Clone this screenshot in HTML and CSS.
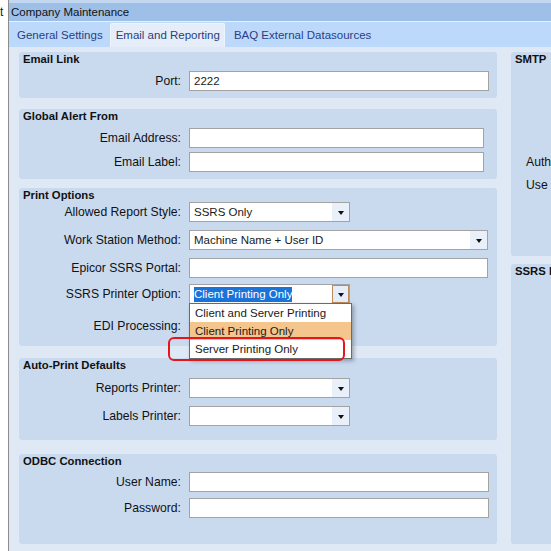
FILE: index.html
```html
<!DOCTYPE html>
<html lang="en">
<head>
    <meta charset="UTF-8">
    <title>Company Maintenance</title>
    <link rel="stylesheet" href="styles.css">
</head>
<body>
    <div id="screen">
        <div id="side"><span>t</span></div>
        <div id="window">
            <div id="topStrip"></div>
            <div id="titleBar">Company Maintenance</div>
            <div id="tabs">
                <div class="tab">General Settings</div>
                <div class="tab active">Email and Reporting</div>
                <div class="tab">BAQ External Datasources</div>
            </div>
            <div id="content">
                <div id="leftCol">
                    <div class="group g-email">
                        <div class="group-title">Email Link</div>
                        <div class="row r5">
                            <label>Port:</label>
                            <div class="input w300">2222</div>
                        </div>
                    </div>

                    <div class="group g-alert">
                        <div class="group-title">Global Alert From</div>
                        <div class="row r5">
                            <label>Email Address:</label>
                            <div class="input w295"></div>
                        </div>
                        <div class="row r4">
                            <label>Email Label:</label>
                            <div class="input w295"></div>
                        </div>
                    </div>

                    <div class="group g-print">
                        <div class="group-title">Print Options</div>
                        <div class="row r0">
                            <label>Allowed Report Style:</label>
                            <div class="select w161">
                                <span class="select-text">SSRS Only</span>
                                <span class="select-btn"><i class="arrow"></i></span>
                            </div>
                        </div>
                        <div class="row r8">
                            <label>Work Station Method:</label>
                            <div class="select w299">
                                <span class="select-text">Machine Name + User ID</span>
                                <span class="select-btn"><i class="arrow"></i></span>
                            </div>
                        </div>
                        <div class="row r8">
                            <label>Epicor SSRS Portal:</label>
                            <div class="input w299"></div>
                        </div>
                        <div class="row r6">
                            <label>SSRS Printer Option:</label>
                            <div class="select w161 open">
                                <span class="select-text"><span class="selected">Client Printing Only</span></span>
                                <span class="select-btn hover"><i class="arrow"></i></span>
                                <div class="dropdown">
                                    <div class="item">Client and Server Printing</div>
                                    <div class="item current">Client Printing Only</div>
                                    <div class="item">Server Printing Only</div>
                                </div>
                                <div class="callout"></div>
                            </div>
                        </div>
                        <div class="row r12">
                            <label>EDI Processing:</label>
                        </div>
                    </div>

                    <div class="group g-auto">
                        <div class="group-title">Auto-Print Defaults</div>
                        <div class="row r6">
                            <label>Reports Printer:</label>
                            <div class="select w161">
                                <span class="select-text"></span>
                                <span class="select-btn"><i class="arrow"></i></span>
                            </div>
                        </div>
                        <div class="row r8">
                            <label>Labels Printer:</label>
                            <div class="select w161">
                                <span class="select-text"></span>
                                <span class="select-btn"><i class="arrow"></i></span>
                            </div>
                        </div>
                    </div>

                    <div class="group g-odbc">
                        <div class="group-title">ODBC Connection</div>
                        <div class="row r4">
                            <label>User Name:</label>
                            <div class="input w300"></div>
                        </div>
                        <div class="row r6">
                            <label>Password:</label>
                            <div class="input w300"></div>
                        </div>
                    </div>
                </div>

                <div id="rightCol">
                    <div class="group g-smtp">
                        <div class="group-title">SMTP</div>
                        <div class="side-label s-auth">Auth</div>
                        <div class="side-label s-use">Use</div>
                    </div>
                    <div class="group g-ssrs">
                        <div class="group-title">SSRS Forms</div>
                    </div>
                </div>
            </div>
        </div>
    </div>
</body>
</html>
```

FILE: styles.css
```css
body {
    margin: 0;
    width: 551px;
    height: 551px;
    overflow: hidden;
    background-color: white;
    font-family: "Liberation Sans", Arial, sans-serif;
    font-size: 11.5px;
    color: #1a1a1a;
}

#screen {
    display: flex;
    height: 551px;
}

#side {
    width: 8px;
    overflow: hidden;
    padding-top: 5px;
    font-size: 12px;
    line-height: 14px;
}

#window {
    flex: 1;
    display: flex;
    flex-direction: column;
    border-left: 1px solid #8c8c8c;
    overflow: hidden;
}

#topStrip {
    height: 3px;
    background-color: #c3d7f0;
}

#titleBar {
    height: 18px;
    line-height: 18px;
    padding-left: 2px;
    background-color: #9dbfe8;
    border-bottom: 1px solid #e9f1fb;
    color: #111;
}

#tabs {
    display: flex;
    height: 25px;
    background-color: #bcd9fb;
}

.tab {
    padding: 7px 7px 0 8px;
    color: #283f82;
    white-space: nowrap;
}

.tab.active {
    margin-top: 1px;
    padding: 5px 4px 0 5px;
    background-color: #e4edf8;
    border: 1px solid #eef4fb;
    border-bottom: none;
    border-radius: 2px 2px 0 0;
}

.tab.active + .tab {
    padding-left: 9px;
}

#content {
    flex: 1;
    display: flex;
    gap: 14px;
    padding: 5px 0 0 10px;
    background-color: #dfe8f5;
}

#leftCol {
    width: 478px;
    flex-shrink: 0;
}

#rightCol {
    width: 100px;
    flex-shrink: 0;
}

.group {
    background-color: #c9daef;
    border-radius: 3px;
    padding-top: 1px;
    box-sizing: border-box;
}

.group-title {
    font-size: 11.3px;
    font-weight: bold;
    line-height: 13px;
    padding-left: 4px;
    color: #111;
    white-space: nowrap;
}

.g-email { height: 46px; margin-bottom: 11px; }
.g-alert { height: 70px; margin-bottom: 9px; }
.g-print { height: 158px; margin-bottom: 12px; }
.g-auto { height: 82px; margin-bottom: 14px; }
.g-odbc { height: 90px; }

.g-smtp { height: 204px; margin-bottom: 8px; }
.g-ssrs { height: 280px; }

.row {
    display: flex;
    align-items: center;
    height: 20px;
}

.r0 { margin-top: 0; }
.r4 { margin-top: 4px; }
.r5 { margin-top: 5px; }
.r6 { margin-top: 6px; }
.r8 { margin-top: 8px; }
.r12 { margin-top: 12px; }

.row label {
    width: 162px;
    padding-right: 8px;
    text-align: right;
    white-space: nowrap;
    font-size: 12.2px;
    color: #111;
}

.input,
.select {
    height: 20px;
    box-sizing: border-box;
    border: 1px solid #a3a3a3;
    background-color: white;
    line-height: 18px;
}

.input {
    padding-left: 4px;
}

.w161 { width: 161px; }
.w295 { width: 295px; }
.w299 { width: 299px; }
.w300 { width: 300px; }

.select {
    display: flex;
    position: relative;
}

.select-text {
    flex: 1;
    padding-left: 4px;
    white-space: nowrap;
    overflow: hidden;
}

.select-btn {
    width: 17px;
    display: flex;
    align-items: center;
    justify-content: center;
    background-color: #e9f0fa;
}

.select-btn.hover {
    box-sizing: border-box;
    border: 1px solid #c08a55;
    background-color: #e4edf9;
}

.arrow {
    width: 0;
    height: 0;
    border-left: 3px solid transparent;
    border-right: 3px solid transparent;
    border-top: 4px solid #111;
    margin-top: 1px;
}

.selected {
    background-color: #1a73d9;
    color: white;
    padding: 1px 0 2px;
}

.dropdown {
    position: absolute;
    top: 18px;
    left: -1px;
    width: 163px;
    box-sizing: border-box;
    border: 1px solid #6b6b6b;
    background-color: white;
    box-shadow: 2px 2px 4px rgba(0, 0, 0, 0.3);
    z-index: 2;
}

.item {
    height: 18px;
    line-height: 18px;
    padding-left: 5px;
    white-space: nowrap;
}

.item.current {
    background-color: #f4c68d;
}

.callout {
    position: absolute;
    top: 52px;
    left: -22px;
    width: 177px;
    height: 24px;
    box-sizing: border-box;
    border: 2px solid #e8141c;
    border-radius: 6px;
    z-index: 3;
}

.side-label {
    padding-left: 15px;
    height: 20px;
    line-height: 20px;
    white-space: nowrap;
    font-size: 12.2px;
    color: #111;
}

.s-auth { margin-top: 86px; }
.s-use { margin-top: 3px; }
```
